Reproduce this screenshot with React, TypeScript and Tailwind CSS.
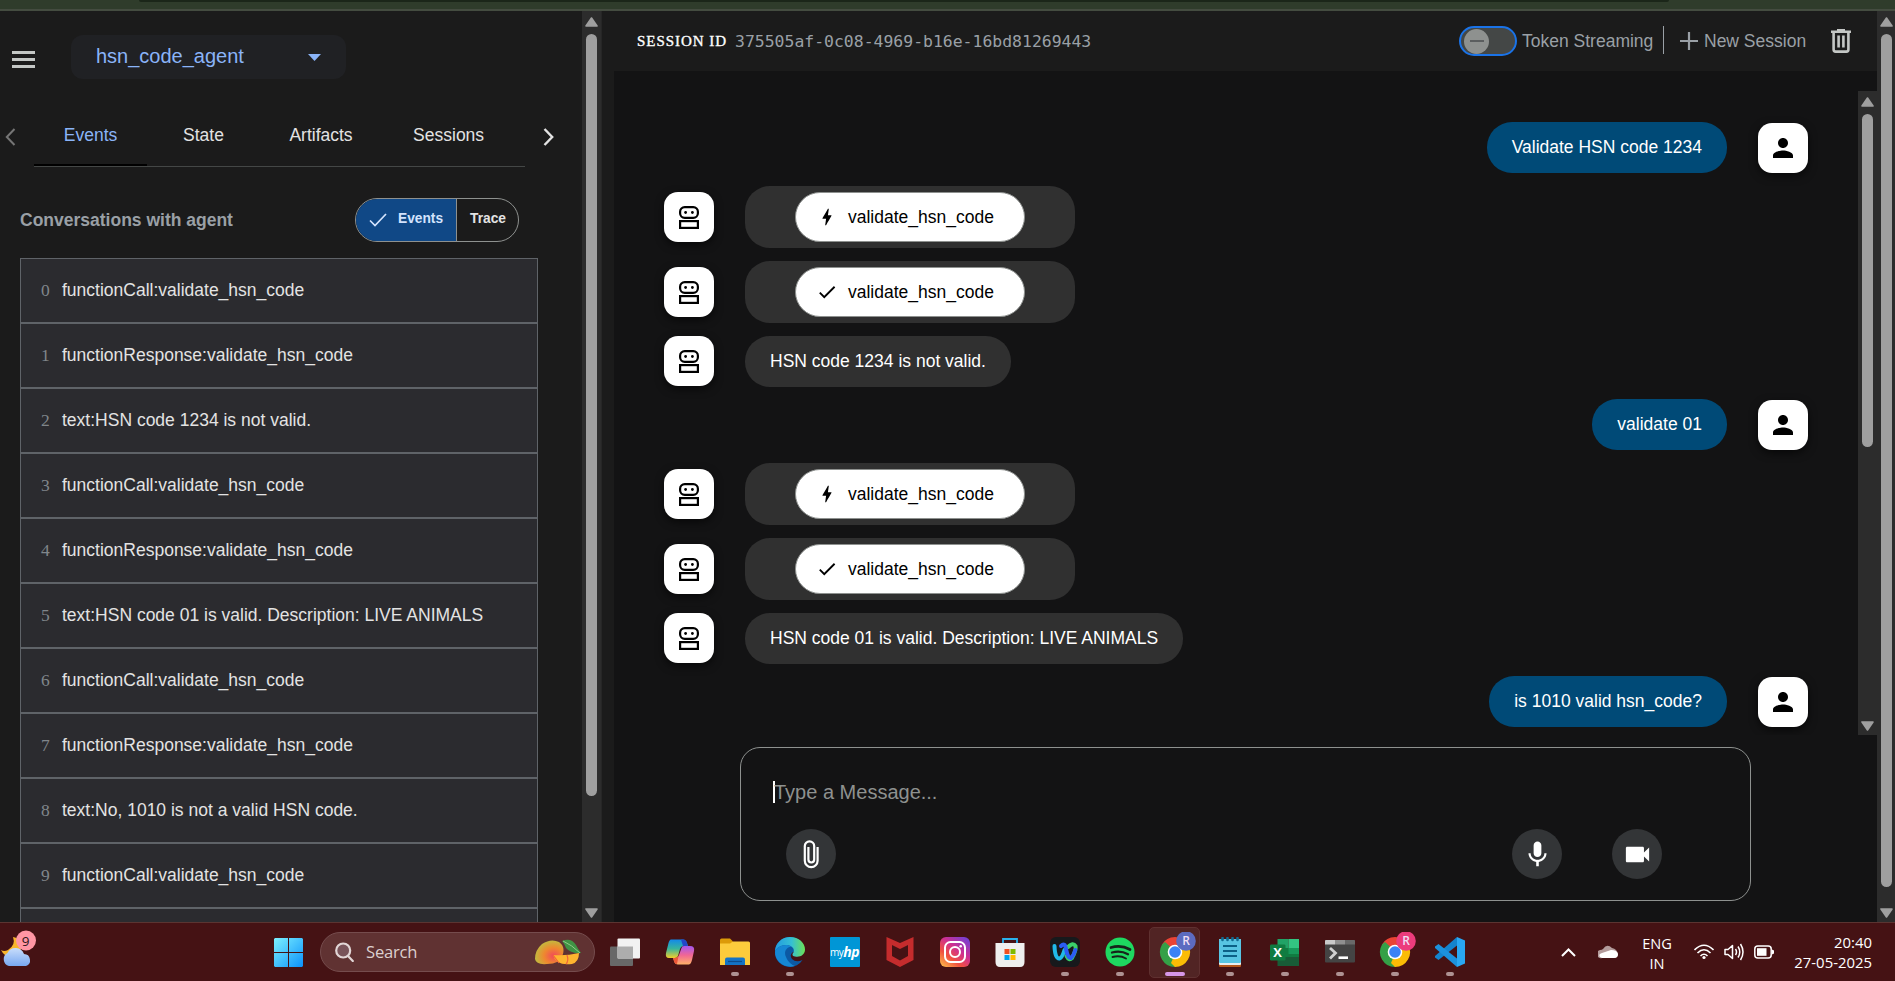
import React from "react";
import { MdMic, MdVideocam, MdPerson, MdCheck, MdBolt } from "react-icons/md";

const events = [
  "functionCall:validate_hsn_code",
  "functionResponse:validate_hsn_code",
  "text:HSN code 1234 is not valid.",
  "functionCall:validate_hsn_code",
  "functionResponse:validate_hsn_code",
  "text:HSN code 01 is valid. Description: LIVE ANIMALS",
  "functionCall:validate_hsn_code",
  "functionResponse:validate_hsn_code",
  "text:No, 1010 is not a valid HSN code.",
  "functionCall:validate_hsn_code",
  "",
];

type Message = { kind: "user" | "text" | "call" | "response"; text: string };

const messages: Message[] = [
  { kind: "user", text: "Validate HSN code 1234" },
  { kind: "call", text: "validate_hsn_code" },
  { kind: "response", text: "validate_hsn_code" },
  { kind: "text", text: "HSN code 1234 is not valid." },
  { kind: "user", text: "validate 01" },
  { kind: "call", text: "validate_hsn_code" },
  { kind: "response", text: "validate_hsn_code" },
  { kind: "text", text: "HSN code 01 is valid. Description: LIVE ANIMALS" },
  { kind: "user", text: "is 1010 valid hsn_code?" },
];

function Arrow({ down = false }: { down?: boolean }) {
  return (
    <svg width="13" height="10" viewBox="0 0 13 10" className={down ? "rotate-180" : ""}>
      <path d="M6.5 1 L12 9 H1 Z" fill="#9f9f9f" stroke="#9f9f9f" strokeWidth="1.6" strokeLinejoin="round" />
    </svg>
  );
}

function Scrollbar({ className, thumb }: { className: string; thumb: string }) {
  return (
    <div className={`flex shrink-0 flex-col items-center bg-[#2c2c2c] pt-[6px] pb-[4px] ${className}`}>
      <Arrow />
      <div className={`mt-[7px] w-[11px] rounded-full bg-[#9f9f9f] ${thumb}`} />
      <div className="flex-1" />
      <Arrow down />
    </div>
  );
}

function Robot() {
  return (
    <div className="flex size-[50px] shrink-0 items-center justify-center rounded-[14px] bg-white shadow-[0_3px_8px_rgba(0,0,0,0.6)]">
      <svg width="20" height="23" viewBox="0 0 20 23" fill="none" stroke="#000" strokeWidth="2.2">
        <rect x="1.1" y="1.1" width="17.8" height="10.8" rx="4.6" />
        <rect x="1.1" y="15.1" width="17.8" height="6.8" />
        <circle cx="6.6" cy="6.5" r="1.4" fill="#000" stroke="none" />
        <circle cx="13.4" cy="6.5" r="1.4" fill="#000" stroke="none" />
      </svg>
    </div>
  );
}

function MessageRow({ message }: { message: Message }) {
  if (message.kind === "user") {
    return (
      <div className="mb-[13px] flex h-[51px] items-end justify-end pr-[50px]">
        <div className="flex h-[51px] items-center rounded-[25px] bg-[#004a77] px-[25px] pb-[1px] text-white">{message.text}</div>
        <div className="ml-[31px] flex size-[50px] items-center justify-center rounded-[14px] bg-white shadow-[0_3px_8px_rgba(0,0,0,0.6)]">
          <MdPerson size={30} color="#000" />
        </div>
      </div>
    );
  }
  if (message.kind === "text") {
    return (
      <div className="mb-[12px] flex h-[51px] items-start pl-[50px]">
        <Robot />
        <div className="ml-[31px] flex h-[51px] items-center rounded-[25px] bg-[#303030] px-[25px] pb-[2px] text-white">{message.text}</div>
      </div>
    );
  }
  return (
    <div className="mb-[13px] flex h-[62px] items-center pl-[50px]">
      <Robot />
      <div className="ml-[31px] flex h-[62px] w-[330px] items-center justify-center rounded-[25px] bg-[#303030]">
        <button className="flex h-[50px] w-[230px] items-center rounded-full border border-[#8e918f] bg-white pl-[20px] text-black">
          {message.kind === "call" ? <MdBolt size={22} className="mr-[1px]" /> : <MdCheck size={22} className="mr-[1px]" />}
          <span className="ml-[9px]">{message.text}</span>
        </button>
      </div>
    </div>
  );
}

function Sidebar() {
  return (
    <aside className="flex w-[582px] shrink-0 flex-col overflow-hidden bg-[#1b1b1b]">
      <div className="flex h-[92px] shrink-0 items-start pt-[24px] pl-[12px]">
        <div className="mt-[16px] flex w-[23px] flex-col gap-[4px]">
          <div className="h-[3px] bg-[#c4c7c5]" />
          <div className="h-[3px] bg-[#c4c7c5]" />
          <div className="h-[3px] bg-[#c4c7c5]" />
        </div>
        <div className="ml-[36px] flex h-[44px] w-[275px] items-center justify-between rounded-[12px] bg-[#202124] pr-[25px] pl-[25px] text-[20px] text-[#8ab4f8]">
          <span className="pb-[3px]">hsn_code_agent</span>
          <svg width="13" height="7" viewBox="0 0 13 7"><path d="M0 0H13L6.5 7Z" fill="#8ab4f8" /></svg>
        </div>
      </div>
      <nav className="flex h-[64px] shrink-0 pl-[5px]">
        <svg className="mt-[25px]" width="11" height="18" viewBox="0 0 11 18" fill="none" stroke="#757575" strokeWidth="2"><path d="M9.5 1 L1.8 9 L9.5 17" /></svg>
        <div className="ml-[18px] flex h-[64px] w-[491px] items-center border-b border-[#444746] text-[#e3e3e3]">
          <div className="flex h-[63px] w-[113px] items-center justify-center border-b-2 border-black pr-[1px] pl-[1px] text-[#8ab4f8]"><span className="pt-[3px]">Events</span></div>
          <span className="ml-[36px]">State</span>
          <span className="ml-[65.5px]">Artifacts</span>
          <span className="ml-[60.5px]">Sessions</span>
        </div>
        <svg className="mt-[25px] ml-[18px]" width="11" height="18" viewBox="0 0 11 18" fill="none" stroke="#e3e3e3" strokeWidth="2.4"><path d="M1.5 1 L9.2 9 L1.5 17" /></svg>
      </nav>
      <div className="flex h-[91px] shrink-0 items-start pt-[31px] pl-[20px]">
        <h2 className="mt-[11px] w-[335px] font-bold text-[#9aa0a6]">Conversations with agent</h2>
        <div className="flex h-[44px] w-[164px] overflow-hidden rounded-full border border-[#8e918f] text-[13.75px] font-bold">
          <div className="flex w-[101px] items-center border-r border-[#8e918f] bg-[#104886] pl-[13px] text-[#d3e3fd]">
            <svg width="18" height="14" viewBox="0 0 18 14" fill="none" stroke="#d3e3fd" strokeWidth="1.7"><path d="M1 7.5 L6 12.5 L17 1" /></svg>
            <span className="ml-[11px] pb-[3px]">Events</span>
          </div>
          <div className="flex items-center pb-[3px] pl-[13px] text-[#e3e3e3]">Trace</div>
        </div>
      </div>
      <div className="ml-[20px] w-[518px] shrink-0">
        {events.map((label, i) => (
          <div key={i} className="flex h-[65px] items-center border border-[#5f6368] bg-[#2b2b2f] pb-[2px] pl-[20px]">
            <span className="w-[21px] font-['Liberation_Serif',serif] text-[#80868b]">{label ? i : ""}</span>
            <span className="text-[#e3e3e3]">{label}</span>
          </div>
        ))}
      </div>
    </aside>
  );
}

function RoundButton({ children, className = "" }: { children: React.ReactNode; className?: string }) {
  return <button className={`flex size-[50px] items-center justify-center rounded-full bg-[#333537] text-white ${className}`}>{children}</button>;
}

function Chat() {
  return (
    <main className="flex w-[1276px] flex-1 flex-col bg-[#131314]">
      <header className="flex h-[60px] shrink-0 items-start bg-[#1b1b1b] pl-[23px] text-[#9aa0a6]">
        <span className="mt-[21px] w-[98px] font-['Liberation_Serif',serif] text-[15px] leading-[18px] font-medium tracking-[0.95px] whitespace-nowrap text-white [-webkit-text-stroke:0.35px_white]">SESSION ID</span>
        <span className="mt-[22px] font-['DejaVu_Sans_Mono',monospace] text-[16.45px] leading-[18px]">375505af-0c08-4969-b16e-16bd81269443</span>
        <div className="flex-1" />
        <div className="mt-[15px] flex h-[30px] w-[58px] items-center rounded-full border-2 border-[#1a73e8] bg-[#444746] pl-[3px]">
          <div className="flex size-[25px] items-center justify-center rounded-full bg-[#8e918f]">
            <div className="h-[2px] w-[14px] bg-[#5b5e5f]" />
          </div>
        </div>
        <span className="mt-[19px] ml-[5px] w-[141px] leading-[22px]">Token Streaming</span>
        <div className="mt-[15px] h-[28px] w-px bg-[#9aa0a6]" />
        <svg className="mt-[21px] ml-[16px]" width="18" height="18" viewBox="0 0 18 18" stroke="#9aa0a6" strokeWidth="2.2"><path d="M9 0V18M0 9H18" /></svg>
        <span className="mt-[19px] ml-[6px] w-[127px] leading-[22px]">New Session</span>
        <svg className="mt-[18px] mr-[26px]" width="20" height="24" viewBox="0 0 20 24" fill="none" stroke="#c4c7c5" strokeWidth="2.6">
          <path d="M0 2.8H20M6 1.4H14M2.6 3V20.5Q2.6 22.6 4.6 22.6H15.4Q17.4 22.6 17.4 20.5V3M7.6 6.5V18.5M12.4 6.5V18.5" />
        </svg>
      </header>
      <div className="mt-[20px] flex h-[644px] shrink-0 overflow-hidden">
        <div className="flex-1 pt-[31px]">
          {messages.map((m, i) => <MessageRow key={i} message={m} />)}
        </div>
        <Scrollbar className="w-[19px]" thumb="h-[333px]" />
      </div>
      <div className="mt-[12px] ml-[126px] h-[154px] w-[1011px] shrink-0 rounded-[20px] border border-[#8e918f] pt-[33px]">
        <div className="ml-[32px] flex h-[22px] items-center border-l-2 border-white text-[20px] text-[#8e918f]"><span className="-ml-[1px]">Type a Message...</span></div>
        <div className="mt-[26px] flex pl-[45px]">
          <RoundButton>
            <svg width="16" height="29" viewBox="0 0 16 29" fill="none" stroke="#fff" strokeWidth="2.2"><path d="M14.6 7V20.8A6.4 6.4 0 0 1 1.8 20.8V6A4.7 4.7 0 0 1 11.2 6V19.6A2.9 2.9 0 0 1 5.4 19.6V7" /></svg>
          </RoundButton>
          <RoundButton className="ml-[676px]"><MdMic size={31} /></RoundButton>
          <RoundButton className="ml-[50px]"><MdVideocam size={31} /></RoundButton>
        </div>
      </div>
    </main>
  );
}

function Chrome({ badge }: { badge: string }) {
  return (
    <svg width="42" height="40" viewBox="-1 0 42 40">
      <path d="M20 20 L7 12.5 A15 15 0 0 1 33 12.5 Z" fill="#ea4335" />
      <path d="M20 20 L33 12.5 A15 15 0 0 1 20 35 Z" fill="#fbbc05" />
      <path d="M20 20 L20 35 A15 15 0 0 1 7 12.5 Z" fill="#34a047" />
      <path d="M20 13H33.3L34 16L24 22Z" fill="#fbbc05" />
      <path d="M26.2 23.5 L20 35 L16 31 L20 22Z" fill="#fbbc05" />
      <path d="M13.8 23.4 L7 12.5 L10 10 L20 19Z" fill="#34a047" />
      <circle cx="20" cy="20" r="7.3" fill="#fff" />
      <circle cx="20" cy="20" r="5.8" fill="#3b82f6" />
      <circle cx="31" cy="9" r="9.8" fill={badge} />
      <text x="31" y="13.3" textAnchor="middle" fill="#f0dff5" fontSize="12" fontWeight="600" fontFamily="Open Sans, sans-serif">R</text>
    </svg>
  );
}

function TaskItem({ children, mark }: { children: React.ReactNode; mark?: "idle" | "active" }) {
  return (
    <div className={`mx-[2px] mt-[4px] flex h-[51px] w-[51px] flex-col items-center rounded-[5px] ${mark === "active" ? "border border-[#5f3030] bg-[#512424]" : "border border-transparent"}`}>
      <div className="flex h-[48px] items-center pt-[2px] pb-[2px]">
        <div className="-my-[3px] flex h-[40px] w-[49px] items-center justify-center">{children}</div>
      </div>
      {mark && <div className={`-mt-[4px] h-[4px] shrink-0 rounded-full ${mark === "active" ? "w-[20px] bg-[#d797e8]" : "w-[8px] bg-[#ae9293]"}`} />}
    </div>
  );
}

function Taskbar() {
  return (
    <footer className="flex h-[59px] shrink-0 border-t border-[#5b3431] bg-[#451214] font-['Open_Sans','Noto_Sans',sans-serif] text-white">
      <svg className="mt-[5px]" width="40" height="42" viewBox="0 0 40 42">
        <defs><linearGradient id="cloud" x2="0" y2="1"><stop stopColor="#c8ddfb" /><stop offset="1" stopColor="#78a8f1" /></linearGradient></defs>
        <path d="M13 9 Q16 17 8 22 Q4 24 1 22 Q4 28 10 29 Q21 27 22 16 Q19 10 13 9Z" fill="#f8b52c" />
        <path d="M9 38 A7 7 0 0 1 7.5 25 A9 9 0 0 1 24 26 A6.2 6.2 0 0 1 26 38 Z" fill="url(#cloud)" />
        <circle cx="26" cy="12.5" r="10" fill="#ff96a4" />
        <text x="25.5" y="17.5" fontSize="13.5" textAnchor="middle" fill="#2c1517" fontFamily="Open Sans, sans-serif">9</text>
      </svg>
      <svg className="mt-[15px] ml-[234px]" width="29" height="29" viewBox="0 0 29 29">
        <defs><linearGradient id="win" x2="1" y2="1"><stop stopColor="#7df1ff" /><stop offset="1" stopColor="#0b91fb" /></linearGradient></defs>
        <path fill="url(#win)" d="M1 0H14V14H0V1ZM15 0H28L29 1V14H15ZM0 15H14V29H1L0 28ZM15 15H29V28L28 29H15Z" />
      </svg>
      <div className="mt-[9px] ml-[17px] flex h-[40px] w-[275px] items-center rounded-full border border-[#754c4d] bg-[#603232] pl-[14px]">
        <svg width="19" height="20" viewBox="0 0 19 20" fill="none" stroke="#e2d6d6" strokeWidth="2.2"><circle cx="8.2" cy="8.5" r="7" fill="#79545a" /><path d="M13 14 L17.8 19" strokeLinecap="round" /></svg>
        <span className="ml-[12px] text-[16.6px] tracking-[-0.2px] text-[#dccfcf]">Search</span>
        <svg className="mr-[12px] ml-auto" width="48" height="27" viewBox="0 0 48 27">
          <defs><radialGradient id="mango" cx=".65" cy=".65" r=".75"><stop stopColor="#f2495a" /><stop offset=".45" stopColor="#ee882f" /><stop offset="1" stopColor="#b5c843" /></radialGradient></defs>
          <path d="M1 20 Q1 11 8 5 Q17 -1 25 3 Q31 7 29 15 Q26 25 13 25 Q2 26 1 20Z" fill="url(#mango)" />
          <path d="M28 2 Q37 -2 42 6 Q44 10 47 14 Q37 15 32 9 Q30 4 28 2Z" fill="#3f9444" />
          <path d="M29 2 Q38 6 46 14" stroke="#91c98a" fill="none" />
          <path d="M19 16 Q32 17 45 14 Q45 23 38 25 Q22 27 19 16Z" fill="#ffb42f" />
          <path d="M19 16 L25 24 M33 16 Q35 22 32 25" stroke="#f0663b" fill="none" strokeWidth="1.2" />
        </svg>
      </div>
      <div className="ml-[2px] flex">
        <TaskItem>
          <svg width="30" height="29" viewBox="0 0 30 29"><rect y="8.5" width="23" height="19.5" rx="1" fill="#686868" /><rect x="7.5" y=".5" width="22.5" height="20" rx="1" fill="#f2f2f2" /><rect x="7.5" y="8.5" width="15.5" height="12" fill="#adadad" /></svg>
        </TaskItem>
        <TaskItem>
          <svg width="30" height="28" viewBox="0 0 30 28">
            <defs>
              <linearGradient id="cp1" x2="0" y2="1"><stop stopColor="#1289eb" /><stop offset=".5" stopColor="#38b59c" /><stop offset="1" stopColor="#f2cd2a" /></linearGradient>
              <linearGradient id="cp2" x2="0" y2="1"><stop stopColor="#a456f0" /><stop offset=".5" stopColor="#f16794" /><stop offset="1" stopColor="#ffb267" /></linearGradient>
            </defs>
            <path d="M6 1.5H18Q21 1.5 22 5L23 8H19Q16 8 15 11L13 18Q12 20 10 20H4Q0 20 1 15L3.5 5Q4.5 1.5 6 1.5Z" fill="url(#cp1)" />
            <path d="M16 1.5H18.5Q21 1.5 22 5L23 8H18Z" fill="#2346c9" />
            <path d="M24 26.5H13Q10 26.5 9 23L8 20H10Q13 20 14 17L16.5 10Q17 8 19 8H25Q30 8 29 13L27 22Q26 26 24 26.5Z" fill="url(#cp2)" />
            <path d="M8 20H10Q12.5 20 13.5 18L12 26Q9.5 26 9 23Z" fill="#ed5738" />
          </svg>
        </TaskItem>
        <TaskItem mark="idle">
          <svg width="30" height="28" viewBox="0 0 30 28">
            <path d="M0 2Q0 .5 1.5 .5H10L13 3.5V8H0Z" fill="#dc9a08" />
            <path d="M0 5.5H10L13 3.5H28.5Q30 3.5 30 5V27H0Z" fill="#fccb3c" />
            <path d="M5 27V21.5Q5 19.5 7 19.5H23Q25 19.5 25 21.5V27Z" fill="#1473c5" /><path d="M8 23.5H22" stroke="#0d4b8b" strokeWidth="1.2" />
          </svg>
        </TaskItem>
        <TaskItem mark="idle">
          <svg width="30" height="30" viewBox="0 0 30 30">
            <defs><linearGradient id="edge"><stop stopColor="#229be0" /><stop offset=".55" stopColor="#35bfd4" /><stop offset="1" stopColor="#6ce156" /></linearGradient></defs>
            <path d="M15 0A15 15 0 1 0 27.500 23Q21 26 17 22Q14 18 18 15L30 13A15 15 0 0 0 15 0Z" fill="#0c59a4" />
            <path d="M0 15C0 6 7 0 15 0C24 0 30 6 30 12.5C30 18 25 20.5 20 19.5C17 19 17 17 18.5 15.5C20 12 17 8 11 8C6 8 1 11 0 15Z" fill="url(#edge)" />
            <path d="M0 15C1 11 6 8 11 8C13 8 15 8.500 16 9.500C10 11 9 16 11 20C13 25 17 28 20 29C9 32 0 24 0 15Z" fill="#1687d4" />
          </svg>
        </TaskItem>
        <TaskItem><div className="flex size-[30px] items-center justify-center rounded-[1px] bg-[#0096d6] text-[10px] tracking-[-0.5px]">my<b className="text-[14px] leading-[20px] italic">hp</b></div></TaskItem>
        <TaskItem><svg width="28" height="30" viewBox="0 0 28 30"><path d="M.5 0L14 6L27.5 0V23L14 30L.5 23ZM6 8V19L14 23.5L22 19V8L14 12Z" fill="#c52c2d" fillRule="evenodd" /></svg></TaskItem>
        <TaskItem>
          <svg width="30" height="30" viewBox="0 0 30 30">
            <defs><linearGradient id="ig" x1="0" y1="1" x2=".8" y2="0"><stop stopColor="#ffc84d" /><stop offset=".35" stopColor="#f1513f" /><stop offset=".65" stopColor="#ce2f91" /><stop offset="1" stopColor="#7a3ed0" /></linearGradient></defs>
            <rect width="30" height="30" rx="6" fill="url(#ig)" />
            <g fill="none" stroke="#fff" strokeWidth="2"><rect x="5" y="5" width="20" height="20" rx="5.5" /><circle cx="15" cy="15" r="5" /></g><circle cx="20.7" cy="9.3" r="1.3" fill="#fff" />
          </svg>
        </TaskItem>
        <TaskItem>
          <svg width="30" height="30" viewBox="0 0 30 30">
            <path d="M8 7V2H22V7" fill="none" stroke="#2bb2ed" strokeWidth="1.8" />
            <path d="M.5 6H29.5V25Q29.5 30 25 30H5Q.5 30 .5 25Z" fill="#efefef" />
            <rect x="9.5" y="12" width="5" height="5" fill="#f25022" /><rect x="15.5" y="12" width="5" height="5" fill="#7fba00" /><rect x="9.5" y="18" width="5" height="5" fill="#00a4ef" /><rect x="15.5" y="18" width="5" height="5" fill="#ffb900" />
          </svg>
        </TaskItem>
        <TaskItem mark="idle">
          <svg width="30" height="30" viewBox="0 0 30 30" fill="none" strokeWidth="4" strokeLinecap="round">
            <rect width="30" height="30" rx="6" fill="#17191c" />
            <path d="M18 10Q23 5 25.5 9Q26.500 13 22 21Q19 24 16.5 19" stroke="#3bd06a" />
            <path d="M4.500 9Q5 22 9.5 21.5Q12 21 14.5 13" stroke="#20b9e8" />
            <path d="M11 9Q15 5 16 12Q18 22 21 21Q24 18 25.3 13" stroke="#2b5cf4" />
          </svg>
        </TaskItem>
        <TaskItem mark="idle">
          <svg width="30" height="30" viewBox="0 0 30 30" fill="none" stroke="#17221b" strokeLinecap="round"><circle cx="15" cy="15" r="14.5" fill="#1ed760" stroke="none" /><path d="M6 10.5Q16 7.5 25 12.5" strokeWidth="2.7" /><path d="M7 15.5Q15.5 13 23 17.2" strokeWidth="2.3" /><path d="M7.5 20Q15 18 21 21.5" strokeWidth="1.9" /></svg>
        </TaskItem>
        <TaskItem mark="active"><Chrome badge="#5c6bc0" /></TaskItem>
        <TaskItem mark="idle">
          <svg width="24" height="30" viewBox="0 0 24 30"><rect x="1" y="27" width="22" height="3" rx="1" fill="#b5581c" /><rect x="1" y="2" width="22" height="26" rx="1" fill="#e9eef0" /><rect x="1" y="2" width="22" height="24" rx="1" fill="#58c5e3" /><path d="M5 9H19M5 14H19M5 19H19" stroke="#0c6187" strokeWidth="1.9" /><path d="M4.5 1V3M9.5 1V3M14.5 1V3M19.5 1V3" stroke="#126b91" strokeWidth="2.6" strokeLinecap="round" /></svg>
        </TaskItem>
        <TaskItem mark="idle">
          <svg width="30" height="28" viewBox="0 0 30 28"><path d="M7.5 1H18.5V10H7.5Z" fill="#21a366" /><path d="M18.5 1H29V10H18.5Z" fill="#33c481" /><path d="M7.5 10H29V20H7.5Z" fill="#107c41" /><path d="M18.5 10H29V16H18.5Z" fill="#17995a" /><path d="M7.5 19H29V28H7.5Z" fill="#185c37" /><rect y="6.5" width="15.5" height="16" rx="1.2" fill="#107c41" /><text x="7.7" y="19.3" textAnchor="middle" fill="#fff" fontSize="13" fontWeight="700" fontFamily="Open Sans, sans-serif">X</text></svg>
        </TaskItem>
        <TaskItem mark="idle">
          <svg width="30" height="28" viewBox="0 0 30 28"><g transform="translate(0 2)"><rect width="30" height="22.5" rx="1" fill="#444" /><path d="M0 1Q0 0 1 0H10V4.5H0Z" fill="#c9c9c9" /><path d="M10 0H20V4.5H10Z" fill="#909090" /><path d="M20 0H29Q30 0 30 1V4.5H20Z" fill="#696969" /><path d="M5 8L10.5 13L5 18.5" fill="none" stroke="#d0d0d0" strokeWidth="2.8" /><path d="M13.5 17.7H23" stroke="#fff" strokeWidth="2.6" /></g></svg>
        </TaskItem>
        <TaskItem mark="idle"><Chrome badge="#ec3c7c" /></TaskItem>
        <TaskItem mark="idle">
          <svg width="30" height="30" viewBox="0 0 30 30"><path d="M22 0L30 3.5V26.5L22 30Z" fill="#29a7f2" /><path d="M22 0V8.5L3.5 23L0 20.5V19Z" fill="#1483cd" /><path d="M22 30V21.5L3.5 7L0 9.5V11Z" fill="#1c91dd" /></svg>
        </TaskItem>
      </div>
      <div className="ml-[84px] flex">
        <svg className="mt-[25px]" width="15" height="9" viewBox="0 0 15 9" fill="none" stroke="#fff" strokeWidth="2"><path d="M1 8L7.5 1.5L14 8" /></svg>
        <svg className="mt-[22px] ml-[22px]" width="20" height="14" viewBox="0 0 20 14"><path d="M4 13A4 4 0 0 1 2 5Q4 5 5 4Q9-2 14 3Q19 4 20 9Q20 13 16 13Z" fill="#b49c9c" /><path d="M2 12Q0 9 4 8L13 5Q19 5 20 9Q20 13 16 13H4Z" fill="#fff" /></svg>
        <div className="mt-[10px] ml-[19px] w-[40px] text-center text-[14.6px] leading-[20px]">ENG<br />IN</div>
        <svg className="mt-[21px] ml-[17px]" width="20" height="16" viewBox="0 0 20 16" fill="none" stroke="#fff" strokeWidth="1.6"><path d="M.5 6Q10-3.5 19.5 6M3.5 9Q10 2.5 16.5 9M6.5 12Q10 8.5 13.5 12" /><circle cx="10" cy="13.5" r="1.6" fill="#fff" stroke="none" /></svg>
        <svg className="mt-[20px] ml-[10px]" width="20" height="18" viewBox="0 0 20 18" fill="none" stroke="#fff" strokeWidth="1.5" strokeLinejoin="round"><path d="M1 6.5H4L8.5 2.5V15.5L4 11.5H1ZM11.5 6Q13.5 9 11.5 12M14 3.5Q17.5 9 14 14.5M16.500 1Q21.5 9 16.500 17" /></svg>
        <svg className="mt-[22px] ml-[10px]" width="20" height="14" viewBox="0 0 20 14"><rect x=".8" y="1" width="16.4" height="12" rx="3" fill="none" stroke="#fff" strokeWidth="1.5" /><rect x="3" y="3.2" width="9.5" height="7.6" fill="#fff" /><path d="M18 4.5L20 5.5V8.5L18 9.5Z" fill="#fff" /></svg>
        <div className="mt-[9px] w-[98px] text-right text-[14.9px] leading-[20px]">20:40<br />27-05-2025</div>
      </div>
    </footer>
  );
}

export default function App() {
  return (
    <div className="flex h-[981px] w-[1895px] flex-col overflow-hidden bg-[#131314] font-['Liberation_Sans',Arial,sans-serif] text-[17.5px] leading-[22px]">
      <div className="flex h-[11px] shrink-0 justify-center border-b-2 border-[#444c40] bg-[#2f3c2b] pr-[87px]">
        <div className="h-[2px] w-[1530px] rounded-b-[6px] bg-[#1b2619]" />
      </div>
      <div className="flex h-[911px] shrink-0">
        <Sidebar />
        <Scrollbar className="w-[19px]" thumb="h-[762px]" />
        <div className="w-[13px] shrink-0 border-l border-[#262626] bg-[#1b1b1b]" />
        <Chat />
        <Scrollbar className="w-[18px]" thumb="h-[853px]" />
      </div>
      <Taskbar />
    </div>
  );
}
